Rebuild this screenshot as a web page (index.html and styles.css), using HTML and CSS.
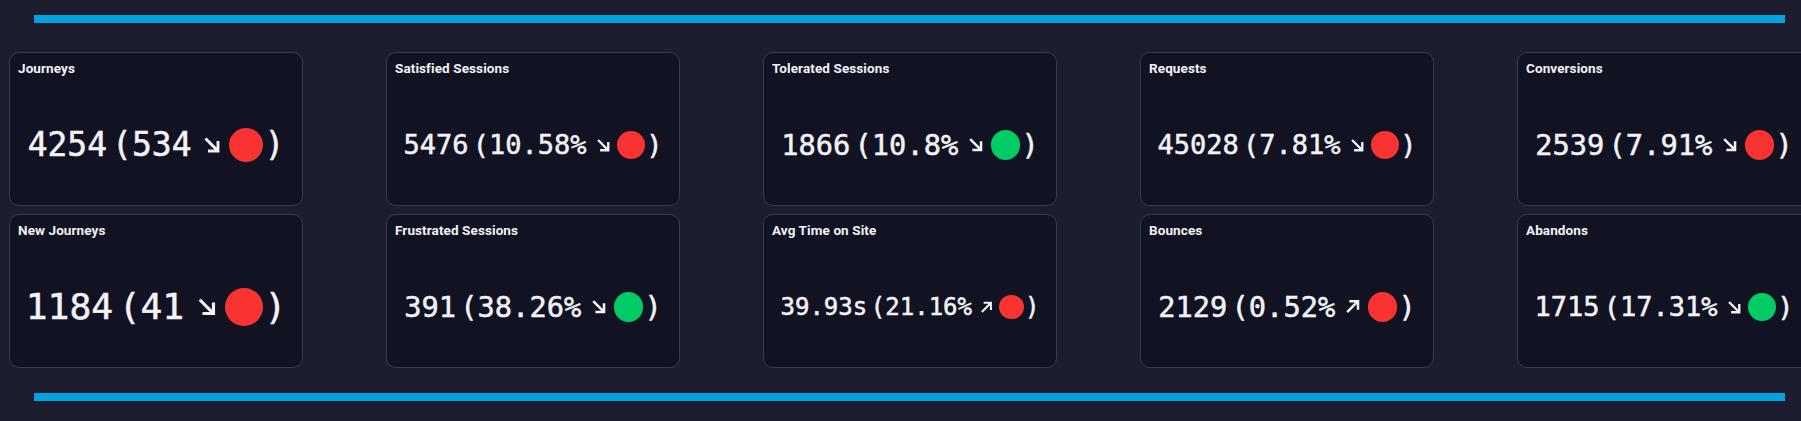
FILE: index.html
```html
<!DOCTYPE html>
<html lang="en">
<head>
<meta charset="utf-8">
<title>Sessions dashboard</title>
<link rel="stylesheet" href="styles.css">
</head>
<body>
<div class="page">
  <div class="bar"></div>
  <div class="grid">
    <div class="card">
      <div class="title">Journeys</div>
      <div class="body"><div class="value" style="--fs:33px"><span class="txt">4254 (534</span><svg class="arrow" viewBox="0 0 14 14"><path d="M2 2 L11.5 11.5 M4 12 H12 V4"/></svg><span class="dot red"></span><span class="close">)</span></div></div>
    </div>
    <div class="card">
      <div class="title">New Journeys</div>
      <div class="body"><div class="value" style="--fs:36.3px"><span class="txt">1184 (41</span><svg class="arrow" viewBox="0 0 14 14"><path d="M2 2 L11.5 11.5 M4 12 H12 V4"/></svg><span class="dot red"></span><span class="close">)</span></div></div>
    </div>
    <div class="card">
      <div class="title">Satisfied Sessions</div>
      <div class="body"><div class="value" style="--fs:27px"><span class="txt">5476 (10.58%</span><svg class="arrow" viewBox="0 0 14 14"><path d="M2 2 L11.5 11.5 M4 12 H12 V4"/></svg><span class="dot red"></span><span class="close">)</span></div></div>
    </div>
    <div class="card">
      <div class="title">Frustrated Sessions</div>
      <div class="body"><div class="value" style="--fs:28.7px"><span class="txt">391 (38.26%</span><svg class="arrow" viewBox="0 0 14 14"><path d="M2 2 L11.5 11.5 M4 12 H12 V4"/></svg><span class="dot green"></span><span class="close">)</span></div></div>
    </div>
    <div class="card">
      <div class="title">Tolerated Sessions</div>
      <div class="body"><div class="value" style="--fs:28.7px"><span class="txt">1866 (10.8%</span><svg class="arrow" viewBox="0 0 14 14"><path d="M2 2 L11.5 11.5 M4 12 H12 V4"/></svg><span class="dot green"></span><span class="close">)</span></div></div>
    </div>
    <div class="card">
      <div class="title">Avg Time on Site</div>
      <div class="body"><div class="value" style="--fs:24px"><span class="txt">39.93s (21.16%</span><svg class="arrow" viewBox="0 0 14 14"><path d="M2 12 L11.5 2.5 M4 2 H12 V10"/></svg><span class="dot red"></span><span class="close">)</span></div></div>
    </div>
    <div class="card">
      <div class="title">Requests</div>
      <div class="body"><div class="value" style="--fs:27px"><span class="txt">45028 (7.81%</span><svg class="arrow" viewBox="0 0 14 14"><path d="M2 2 L11.5 11.5 M4 12 H12 V4"/></svg><span class="dot red"></span><span class="close">)</span></div></div>
    </div>
    <div class="card">
      <div class="title">Bounces</div>
      <div class="body"><div class="value" style="--fs:28.7px"><span class="txt">2129 (0.52%</span><svg class="arrow" viewBox="0 0 14 14"><path d="M2 12 L11.5 2.5 M4 2 H12 V10"/></svg><span class="dot red"></span><span class="close">)</span></div></div>
    </div>
    <div class="card">
      <div class="title">Conversions</div>
      <div class="body"><div class="value" style="--fs:28.7px"><span class="txt">2539 (7.91%</span><svg class="arrow" viewBox="0 0 14 14"><path d="M2 2 L11.5 11.5 M4 12 H12 V4"/></svg><span class="dot red"></span><span class="close">)</span></div></div>
    </div>
    <div class="card">
      <div class="title">Abandons</div>
      <div class="body"><div class="value" style="--fs:27px"><span class="txt">1715 (17.31%</span><svg class="arrow" viewBox="0 0 14 14"><path d="M2 2 L11.5 11.5 M4 12 H12 V4"/></svg><span class="dot green"></span><span class="close">)</span></div></div>
    </div>
  </div>
  <div class="bar"></div>
</div>
</body>
</html>
```
FILE: styles.css
```css
html, body {
  margin: 0;
  padding: 0;
  background: #1c1d2e;
  overflow: hidden;
}

.page {
  width: 1801px;
  height: 421px;
  padding-top: 15px;
  box-sizing: border-box;
  overflow: hidden;
}

.bar {
  height: 8px;
  margin: 0 16px 0 34px;
  background: #00a2e2;
}

.grid {
  display: grid;
  grid-template-rows: repeat(2, 154px);
  grid-auto-flow: column;
  grid-auto-columns: 294px;
  column-gap: 83px;
  row-gap: 8px;
  margin: 29px 0 25px;
  padding-left: 9px;
}

.card {
  display: flex;
  flex-direction: column;
  box-sizing: border-box;
  background: #111222;
  border: 1px solid #3a3b4d;
  border-radius: 10px;
  color: #f2f2f7;
}

.title {
  padding: 7px 8px 0;
  font-family: Roboto, "Liberation Sans", sans-serif;
  font-weight: 700;
  font-size: 13.5px;
  line-height: 16px;
  height: 16px;
  letter-spacing: 0.1px;
}

.body {
  flex: 1;
  display: flex;
  align-items: center;
  justify-content: center;
  padding-top: 9px;
}

.value {
  display: flex;
  align-items: center;
  font-family: "DejaVu Sans Mono", monospace;
  font-size: var(--fs);
  line-height: 1.2;
  white-space: nowrap;
  color: #f2f2f7;
  -webkit-text-stroke: 0.5px #f2f2f7;
}

.txt {
  word-spacing: -0.45em;
}

.arrow {
  width: 0.53em;
  height: 0.53em;
  margin-left: 0.35em;
  fill: none;
  stroke: #f2f2f7;
  stroke-width: 2.3;
}

.dot {
  width: 1.04em;
  height: 1.04em;
  border-radius: 50%;
  margin-left: 0.25em;
}

.dot.red {
  background: #f93232;
}

.dot.green {
  background: #00cc66;
}

.close {
  margin-left: 0.04em;
}
```
